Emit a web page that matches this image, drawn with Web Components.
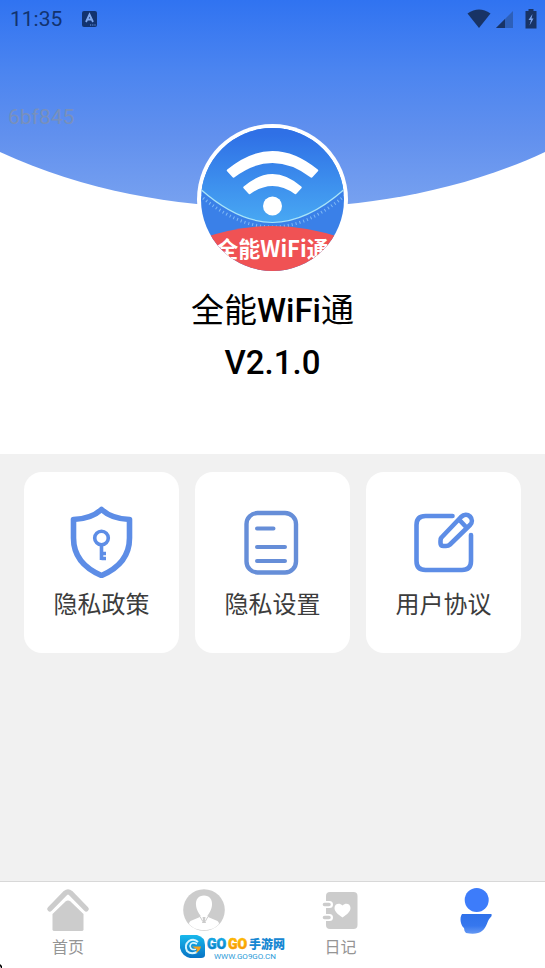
<!DOCTYPE html>
<html lang="zh-CN">
<head>
<meta charset="utf-8">
<meta name="viewport" content="width=device-width, initial-scale=1">
<title>全能WiFi通</title>
<style>
  body { margin: 0; font-family: Roboto, "Noto Sans CJK SC", sans-serif; color: #000; background: #fff; }
  profile-hero b { font-weight: 500; }
</style>
</head>
<body>
<app-screen>
  <profile-hero slot="hero" device="6bf845" version="V2.1.0">
    <status-bar slot="status" time="11:35"></status-bar>
    <app-avatar slot="avatar"></app-avatar>
    <span slot="name">全能<b>WiFi</b>通</span>
  </profile-hero>
  <action-card icon="shield">隐私政策</action-card>
  <action-card icon="document">隐私设置</action-card>
  <action-card icon="edit">用户协议</action-card>
  <tab-bar slot="tabs">
    <tab-item icon="home">首页</tab-item>
    <tab-item icon="person" name="联系人"></tab-item>
    <tab-item icon="diary">日记</tab-item>
    <tab-item icon="me" name="我的"></tab-item>
    <site-mark slot="mark"></site-mark>
  </tab-bar>
</app-screen>

<script>
const ICONS = {
  shield: `<svg viewBox="0 0 72 72" fill="none" stroke="#5d8de6">
    <path stroke-width="5.600" stroke-linejoin="round" d="M35.500 3.500C28 10.500 19 13 7.500 13.500V32C7.500 50 18 62 35.500 69.500C53 62 63.500 50 63.500 32V13.500C52 13 43 10.500 35.500 3.500Z"/>
    <circle cx="35.500" cy="32" r="6.800" stroke-width="3.600"/><path stroke-width="3.600" d="M35.500 39V54M35.500 47.500H40M35.500 52.500H40"/></svg>`,
  document: `<svg viewBox="0 0 72 72" fill="none" stroke="#668ed8" stroke-width="4.400" stroke-linecap="round">
    <rect x="9.500" y="7" width="49.500" height="59.500" rx="11"/><path d="M20 22.500H36.500M20 41H48M20 55H48" stroke-width="4"/></svg>`,
  edit: `<svg viewBox="0 0 72 72" fill="none" stroke="#5d8de6" stroke-width="4.600" stroke-linecap="round" stroke-linejoin="round">
    <path d="M44.500 10H17.500Q8.500 10 8.500 19V55Q8.500 64 17.500 64H54Q63 64 63 55V29"/>
    <path d="M33.500 31.500L53 11C56 8 59.500 8 62 10.500C64.500 13 64.500 16.500 62 19L42 38.500Q40.500 40 38 40H35.500Q32.500 40 32.500 37V35Q32.500 32.500 33.500 31.500ZM51.500 14L58.500 21.500"/></svg>`,
  home: `<svg viewBox="0 0 42 42" fill="#ccc"><path d="M2.800 20L18.500 4Q21 1.800 23.500 4L39.200 20" fill="none" stroke="#ccc" stroke-width="5.200" stroke-linecap="round"/>
    <path d="M5.500 25L18.500 12.500Q21 10.500 23.500 12.500L36.500 25V40.500Q36.500 42 34.500 42H7.500Q5.500 42 5.500 40.500Z"/></svg>`,
  person: `<svg viewBox="0 0 42 42"><circle cx="21" cy="21" r="20.800" fill="#ccc"/><path fill="#fff" d="M21 6.500C26.500 6.500 29.500 10.500 29 16C28.700 21 25.800 25 24.500 26.500L25 28L34.500 32Q36 33 36 35C32 39.500 27 41 21 41C15 41 10 39.500 6 35Q6 33 7.500 32L17 28L17.500 26.500C16.200 25 13.300 21 13 16C12.500 10.500 15.500 6.500 21 6.500Z"/>
    <path d="M17 27.500L19.500 32M25 27.500L22.500 32" stroke="#ccc" fill="none"/><path d="M19.500 28H22.500L22 30.500L23 34H19L20 30.500Z" fill="#ccc"/></svg>`,
  diary: `<svg viewBox="0 0 42 42"><rect x="6" y="3" width="31.500" height="37" rx="4" fill="#ccc"/>
    <path d="M5 15.500H9.500M5 28.500H9.500" stroke="#fff" stroke-width="7" stroke-linecap="round"/><path d="M4.500 15.500H9M4.500 28.500H9" stroke="#ccc" stroke-width="3.600" stroke-linecap="round"/>
    <path fill="#fff" d="M22.500 28.500C17.500 25 14.500 22.500 14.500 19C14.500 14.500 19.500 13.500 22.500 16.500C25.500 13.500 30.500 14.500 30.500 19C30.500 22.500 27.500 25 22.500 28.500Z"/></svg>`,
  me: `<svg viewBox="0 0 42 48"><defs><linearGradient id="m" x2="0" y2="1"><stop stop-color="#2f71ea"/><stop offset=".6" stop-color="#3677ee"/><stop offset="1" stop-color="#6598f3"/></linearGradient></defs>
    <circle cx="20.700" cy="11" r="12" fill="#3d7cfa"/><path fill="url(#m)" d="M6 25H35.500Q36.500 27 34 29C31 32 31 38 26 42Q21 46 10 44Q8 42 8 39C5 37 3 29 6 25Z"/></svg>`
};

const define = (name, render) => customElements.define(name, class extends HTMLElement {
  constructor() { super(); this.attachShadow({ mode: 'open' }); }
  connectedCallback() { this.shadowRoot.innerHTML = render(this); }
});

define('app-screen', () => `<style>
  :host { display: flex; flex-direction: column; min-height: 100vh; background: #f1f1f1; }
  main { flex: 1; }
  nav { display: grid; grid-template-columns: repeat(3, 1fr); gap: 16px; padding: 18px 24px; }
</style><slot name="hero"></slot><main><nav><slot></slot></nav></main><slot name="tabs"></slot>`);

define('status-bar', el => `<style>
  :host { display: flex; align-items: center; height: 38px; padding: 0 8px 0 10px; box-sizing: border-box; color: #12336f; }
  time { font-size: 21px; font-weight: 400; line-height: 24px; }
  .badge { width: 15px; height: 16px; margin-left: 20px; }
  .system { display: flex; margin-left: auto; gap: 4px; align-items: center; }
  .system svg { height: 20px; } .battery { margin-left: 8px; }
</style><time>${el.getAttribute('time')}</time>
<svg class="badge" viewBox="0 0 15 16"><rect width="15" height="16" rx="2" fill="#12336f"/><path d="M4 11L7.500 3.500L11 11M5.500 8.500H9.500" fill="none" stroke="#7fa8ee" stroke-width="1.800"/><path d="M8 14H14" stroke="#6e9bea" stroke-dasharray="1.200 1"/></svg>
<div class="system">
  <svg width="24" viewBox="0 0 24 20" fill="#183365"><path d="M.500 4.500Q12-3.500 23.500 4.500L12 19Z"/></svg>
  <svg width="18" viewBox="0 0 18 20"><path d="M18 2V19H1Z" fill="#2d5fb8"/><path d="M10 10V19H1Z" fill="#183365"/></svg>
  <svg class="battery" width="12" viewBox="0 0 12 20"><path d="M3.500 0H8.500V2H11.500V19.500H.500V2H3.500Z" fill="#183365"/><path d="M7.500 5L3.500 11H6L4.500 16.500L8.500 9.500H6.500Z" fill="#7ba4ee"/></svg>
</div>`);

define('profile-hero', el => `<style>
  :host { display: block; position: relative; background: #fff; padding-bottom: 65px; }
  .curve { position: absolute; inset: 0 0 auto; width: 100%; height: 208px; }
  .content { position: relative; }
  .row { display: grid; grid-template-columns: 1fr auto 1fr; padding: 66px 8px 0; }
  small { font-size: 21px; line-height: 26px; color: #7890bc; }
  ::slotted([slot=avatar]) { margin-top: 20px; }
  h1, p { margin: 0; text-align: center; font-size: 33px; line-height: 52px; font-weight: 400; }
  h1 { margin-top: 10px; } p { font-weight: 500; }
</style>
<svg class="curve" viewBox="0 0 545 208" preserveAspectRatio="none"><defs><linearGradient id="g" x2="0" y2="1"><stop stop-color="#3073f1"/><stop offset=".35" stop-color="#4c85f0"/><stop offset=".65" stop-color="#6190ee"/><stop offset="1" stop-color="#78a2f0"/></linearGradient></defs>
<path fill="url(#g)" d="M0 0H545V152C455 194 355 208 272.500 208C190 208 90 194 0 152Z"/></svg>
<div class="content"><slot name="status"></slot>
<div class="row"><small>${el.getAttribute('device')}</small><slot name="avatar"></slot></div>
<h1><slot name="name"></slot></h1><p>${el.getAttribute('version')}</p></div>`);

define('app-avatar', () => `<style>:host { display: block; width: 151px; height: 151px; } svg { display: block; width: 100%; }
 text { font: 700 22px "Noto Sans CJK SC", sans-serif; }</style>
<svg viewBox="0 0 151 151"><defs><clipPath id="c"><circle cx="75.500" cy="75.500" r="71.500"/></clipPath>
<linearGradient id="s" x2="0" y2="1"><stop offset=".1" stop-color="#2f70e6"/><stop offset="1" stop-color="#48a8f3"/></linearGradient></defs>
<circle cx="75.500" cy="75.500" r="75.500" fill="#fff"/>
<g clip-path="url(#c)"><rect width="151" height="151" fill="#3a80e8"/>
<path d="M0 0H151V62Q112 98 75.500 98.500Q39 98 0 62Z" fill="url(#s)" stroke="#a8e4f8" stroke-width="1.200"/>
<path d="M0 69Q39 103 75.500 103Q112 103 151 69" fill="none" stroke="#82baf4" stroke-width="3" stroke-dasharray="1 3"/>
<path d="M0 116Q38 102 75.500 102Q113 102 151 116V151H0Z" fill="#f05254"/>
<path d="M31 46.500Q75.500 10 120 46.500L114.500 52.500Q75.500 23 36.500 52.500ZM47.500 63.500Q75.500 39 103.500 63.500L98.500 69Q75.500 52.500 52.500 69Z" fill="#fff" stroke="#fff" stroke-width="2.400" stroke-linejoin="round"/>
<circle cx="75.500" cy="82" r="9.500" fill="#fff"/>
<text x="75.500" y="133" text-anchor="middle" fill="#fff">全能WiFi通</text></g></svg>`);

define('action-card', el => `<style>
  :host { display: block; }
  button { width: 100%; border: 0; border-radius: 18px; background: #fff; padding: 34px 0 32px; font: 400 24px/36px "Noto Sans CJK SC", sans-serif; color: #3c3c3c; display: flex; flex-direction: column; align-items: center; gap: 7px; }
  svg { width: 72px; height: 72px; display: block; }
</style><button type="button">${ICONS[el.getAttribute('icon')]}<span><slot></slot></span></button>`);

define('tab-bar', () => `<style>
  :host { display: block; position: relative; background: #fff; border-top: 1px solid #d8d8d8; }
  nav { display: grid; grid-template-columns: repeat(4, 1fr); height: 86px; }
  ::slotted([slot=mark]) { position: absolute; left: 33%; bottom: 8px; }
  .corner { position: absolute; left: 0; bottom: 0; width: 2px; height: 4px; }
</style><nav><slot></slot></nav><slot name="mark"></slot><svg class="corner" viewBox="0 0 2 4"><path d="M0 0L2 2V4H1L0 2Z"/></svg>`);

define('tab-item', el => `<style>
  :host { display: block; }
  button { width: 100%; border: 0; background: none; padding: 7px 0 0; font: 400 16px/24px "Noto Sans CJK SC", sans-serif; color: #959595; display: flex; flex-direction: column; align-items: center; gap: 3px; }
  svg { width: 42px; display: block; overflow: visible; }
</style><button type="button"${el.getAttribute('name') ? ` aria-label="${el.getAttribute('name')}"` : ''}>${ICONS[el.getAttribute('icon')]}<span><slot></slot></span></button>`);

define('site-mark', () => `<style>
  :host { display: block; width: 105px; height: 26px; } svg { display: block; width: 100%; overflow: visible; }
  .en { font: 900 14px Roboto, sans-serif; stroke-width: .5; }
  .zh { font: 900 12px "Noto Sans CJK SC", sans-serif; fill: #1687d2; }
  .url { font: 400 8px Roboto, sans-serif; fill: #2c9bd8; }
</style><svg viewBox="0 0 105 26"><defs><linearGradient id="b" x2="0" y2="1"><stop stop-color="#18b8ec"/><stop offset="1" stop-color="#0873c4"/></linearGradient><linearGradient id="o" x2="0" y2="1"><stop stop-color="#ffc400"/><stop offset="1" stop-color="#f58a08"/></linearGradient></defs>
<path d="M0 2Q0 1 2 1H17Q25 3 25 11V21Q25 24 21 24H10Q2 22 0 14Z" fill="url(#b)"/>
<path d="M18 8Q14 4 9 7Q4 11 7 17Q11 21 17 18" fill="none" stroke="#d5f5ff" stroke-width="2"/><path d="M17 10Q11 7 10 12Q11 17 16 15" fill="none" stroke="#d5f5ff" stroke-width="1.600"/><path d="M12 12.500H21Q20 17 16 19L17 15.500Z" fill="#f6a21c"/>
<text class="en" x="27" y="15" fill="url(#b)" stroke="#0c93d8">GO</text><text class="en" x="48" y="15" fill="url(#o)" stroke="#fbae08">GO</text>
<text class="zh" x="69" y="15">手游网</text><text class="url" x="34" y="25">WWW.GO9GO.CN</text></svg>`);
</script>
</body>
</html>
